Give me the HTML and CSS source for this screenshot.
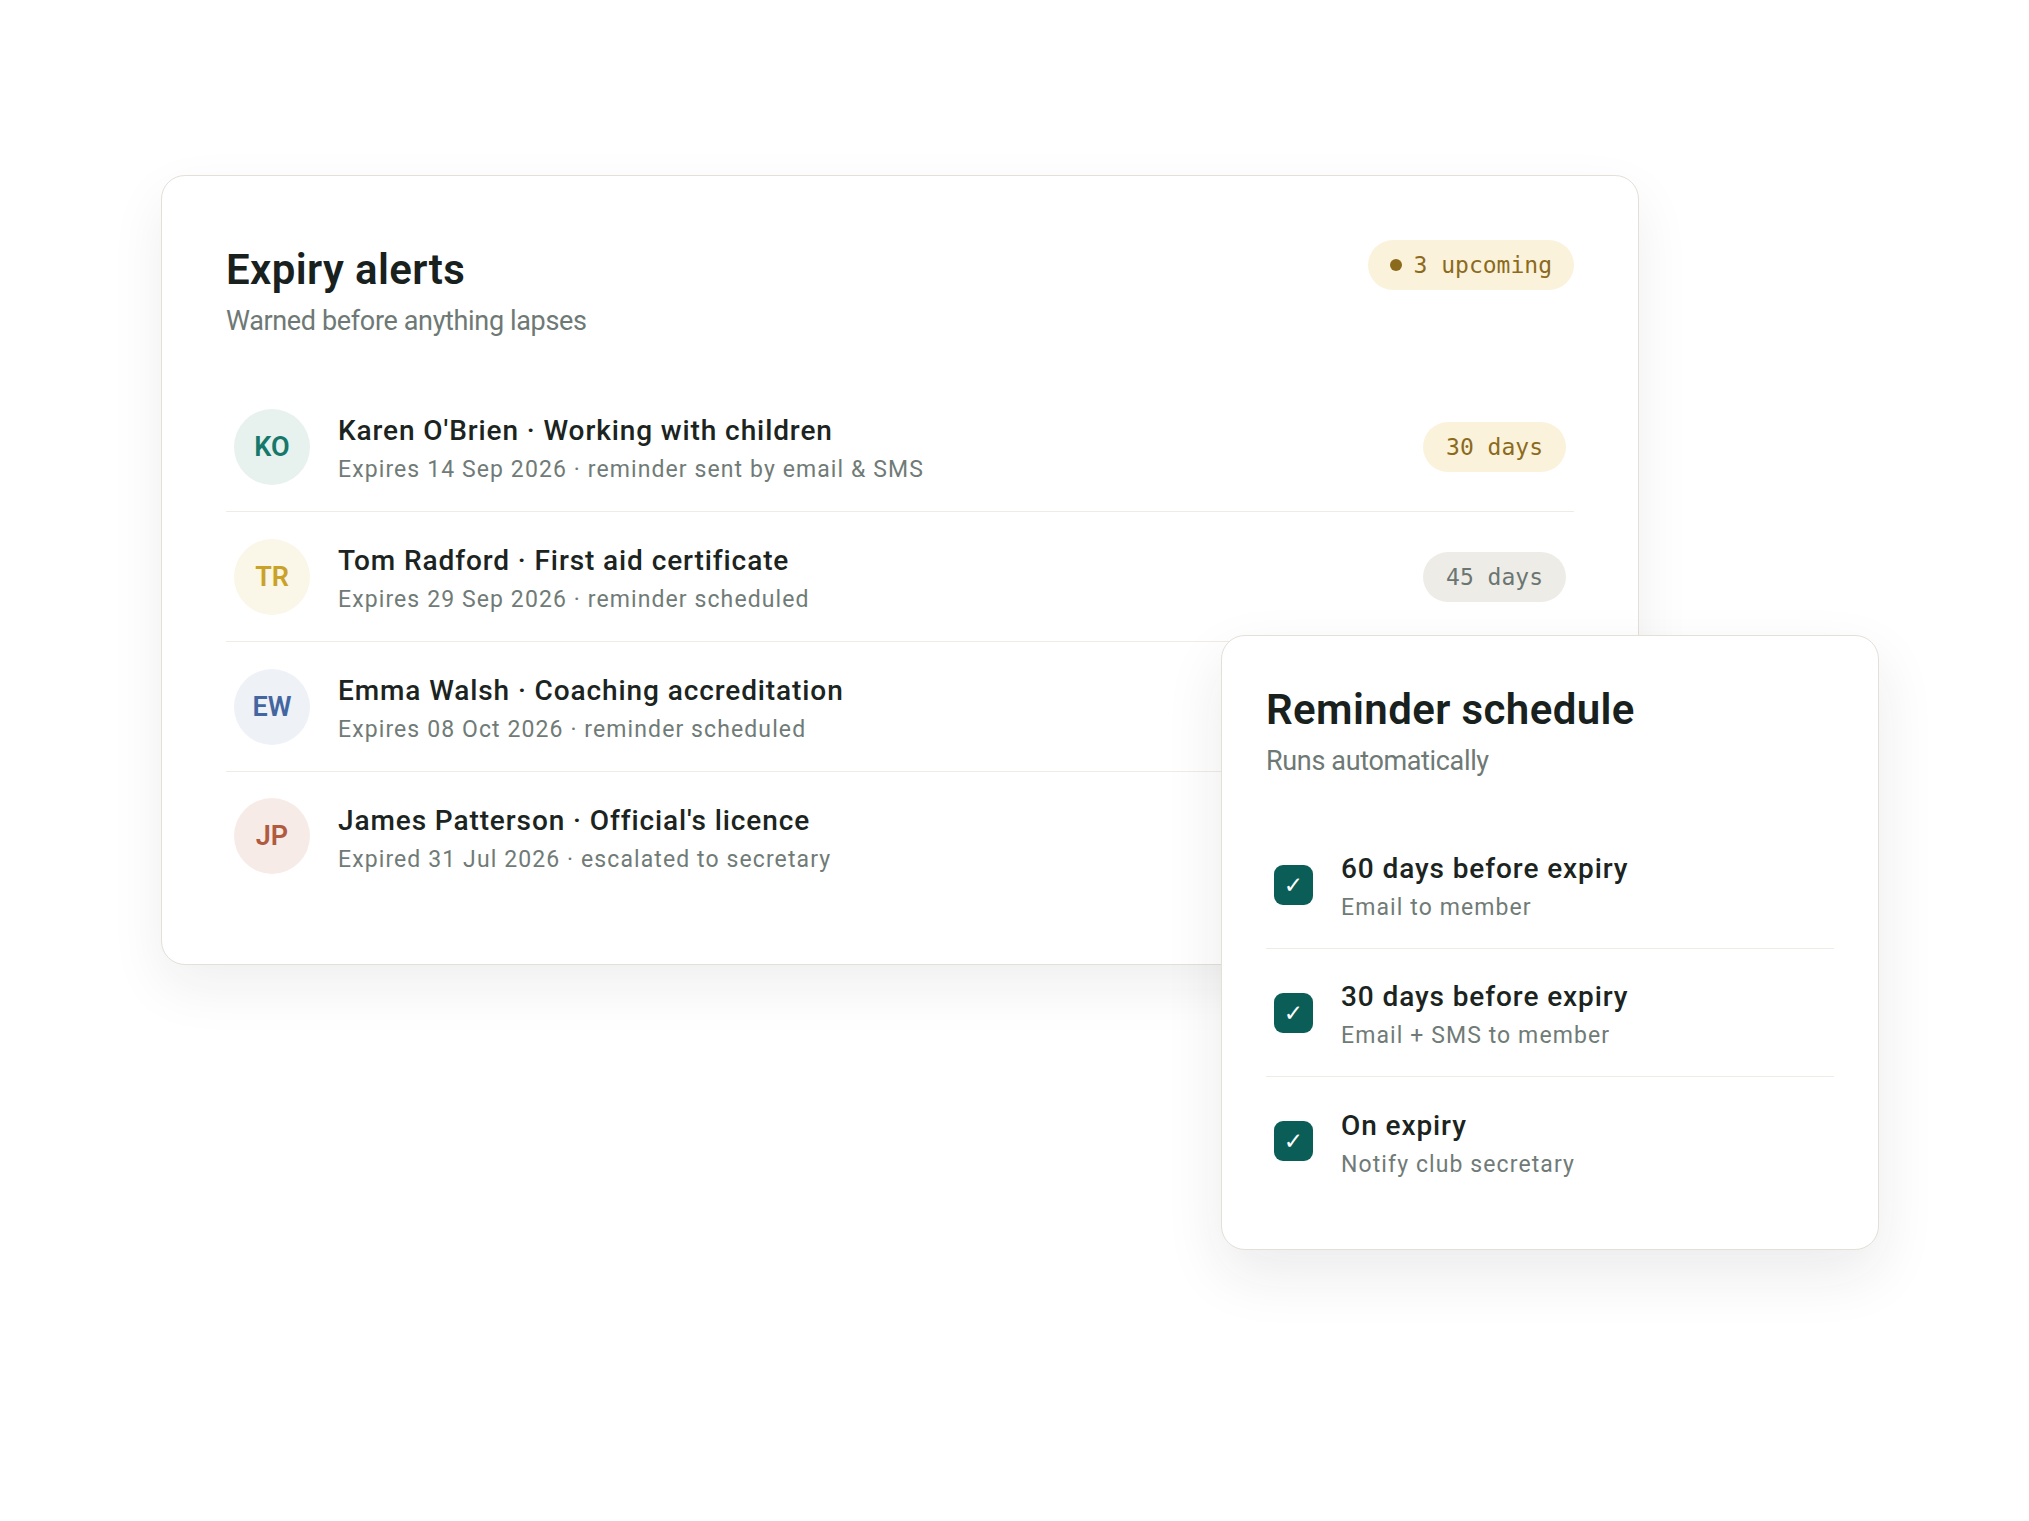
FILE: index.html
```html
<!DOCTYPE html>
<html lang="en">
<head>
<meta charset="utf-8">
<title>Expiry alerts</title>
<link rel="stylesheet" href="styles.css">
</head>
<body>
<main class="scene">
  <section class="card alerts">
    <header class="card-head">
      <div>
        <h1 class="card-title">Expiry alerts</h1>
        <p class="card-sub">Warned before anything lapses</p>
      </div>
      <span class="badge"><span class="badge-dot"></span>3 upcoming</span>
    </header>
    <ul class="alert-list">
      <li class="alert-row">
        <span class="avatar av-teal">KO</span>
        <div class="row-text">
          <p class="row-title">Karen O'Brien · Working with children</p>
          <p class="row-meta">Expires 14 Sep 2026 · reminder sent by email &amp; SMS</p>
        </div>
        <span class="pill pill-gold">30 days</span>
      </li>
      <li class="alert-row">
        <span class="avatar av-gold">TR</span>
        <div class="row-text">
          <p class="row-title">Tom Radford · First aid certificate</p>
          <p class="row-meta">Expires 29 Sep 2026 · reminder scheduled</p>
        </div>
        <span class="pill pill-grey">45 days</span>
      </li>
      <li class="alert-row">
        <span class="avatar av-blue">EW</span>
        <div class="row-text">
          <p class="row-title">Emma Walsh · Coaching accreditation</p>
          <p class="row-meta">Expires 08 Oct 2026 · reminder scheduled</p>
        </div>
      </li>
      <li class="alert-row">
        <span class="avatar av-rust">JP</span>
        <div class="row-text">
          <p class="row-title">James Patterson · Official's licence</p>
          <p class="row-meta">Expired 31 Jul 2026 · escalated to secretary</p>
        </div>
      </li>
    </ul>
  </section>

  <section class="card schedule">
    <header>
      <h2 class="card-title">Reminder schedule</h2>
      <p class="card-sub">Runs automatically</p>
    </header>
    <ul class="step-list">
      <li class="step">
        <span class="check">✓</span>
        <div class="step-text">
          <p class="row-title">60 days before expiry</p>
          <p class="row-meta step-sub">Email to member</p>
        </div>
      </li>
      <li class="step">
        <span class="check">✓</span>
        <div class="step-text">
          <p class="row-title">30 days before expiry</p>
          <p class="row-meta step-sub">Email + SMS to member</p>
        </div>
      </li>
      <li class="step">
        <span class="check">✓</span>
        <div class="step-text">
          <p class="row-title">On expiry</p>
          <p class="row-meta step-sub">Notify club secretary</p>
        </div>
      </li>
    </ul>
  </section>
</main>
</body>
</html>
```

FILE: styles.css
```css
* { box-sizing: border-box; }

html, body {
  margin: 0;
  padding: 0;
  background: #ffffff;
}

body {
  font-family: Roboto, "Liberation Sans", sans-serif;
  color: #1b2421;
}

p, h1, h2, ul { margin: 0; padding: 0; }
ul { list-style: none; }

.scene {
  position: relative;
  width: 2029px;
  height: 1521px;
  padding: 175px 0 0 161px;
}

.card {
  background: #ffffff;
  border: 1px solid #e4e0d8;
  border-radius: 24px;
  box-shadow: 0 22px 55px rgba(30, 35, 30, 0.07);
}

.alerts {
  width: 1478px;
  padding: 64px;
}

.card-head {
  display: flex;
  justify-content: space-between;
  align-items: flex-start;
}

.card-title {
  font-size: 42px;
  line-height: 60px;
  font-weight: 600;
  color: #18211e;
  letter-spacing: 0.4px;
}

.card-sub {
  margin-top: 2px;
  font-size: 27px;
  line-height: 38px;
  font-weight: 400;
  color: #6e7975;
  letter-spacing: -0.35px;
}

.badge {
  display: inline-flex;
  align-items: center;
  gap: 12px;
  height: 50px;
  padding: 0 22px;
  border-radius: 25px;
  background: #fbf2dc;
  color: #8b6a1c;
  font-family: "DejaVu Sans Mono", "Liberation Mono", monospace;
  font-size: 23px;
}

.badge-dot {
  width: 12px;
  height: 12px;
  border-radius: 50%;
  background: #8b6a1c;
}

.alert-list {
  margin-top: 42px;
}

.alert-row {
  display: flex;
  align-items: center;
  gap: 28px;
  height: 130px;
  padding: 0 8px;
  border-bottom: 1px solid #efece6;
}

.alert-row:last-child {
  border-bottom: none;
  height: 128px;
}

.avatar {
  flex: none;
  width: 76px;
  height: 76px;
  border-radius: 50%;
  display: flex;
  align-items: center;
  justify-content: center;
  font-size: 27px;
  font-weight: 600;
}

.av-teal { background: #e7f2ef; color: #16786a; }
.av-gold { background: #faf6e8; color: #c9a227; }
.av-blue { background: #eef1f6; color: #4466a0; }
.av-rust { background: #f7ebe7; color: #b05a40; }

.row-text {
  flex: 1;
  padding-top: 6px;
}

.row-title {
  font-size: 28px;
  line-height: 36px;
  font-weight: 500;
  color: #1b2421;
  letter-spacing: 0.9px;
}

.row-meta {
  margin-top: 5px;
  font-size: 23px;
  line-height: 32px;
  color: #707b77;
  letter-spacing: 1.1px;
}

.pill {
  flex: none;
  display: inline-flex;
  align-items: center;
  height: 50px;
  padding: 0 23px;
  border-radius: 25px;
  font-family: "DejaVu Sans Mono", "Liberation Mono", monospace;
  font-size: 23px;
}

.pill-gold { background: #fbf2dc; color: #8b6a1c; }
.pill-grey { background: #eeece7; color: #6b7571; }

.schedule {
  position: absolute;
  left: 1221px;
  top: 635px;
  width: 658px;
  padding: 44px;
  box-shadow: 0 24px 60px rgba(30, 35, 30, 0.09);
}

.step-list {
  margin-top: 41px;
}

.step {
  display: flex;
  align-items: center;
  gap: 28px;
  height: 128px;
  padding: 0 8px;
  border-bottom: 1px solid #efece6;
}

.step:last-child {
  border-bottom: none;
  height: 128px;
}

.check {
  flex: none;
  width: 39px;
  height: 40px;
  border-radius: 9px;
  background: #0b5e57;
  color: #ffffff;
  display: flex;
  align-items: center;
  justify-content: center;
  font-family: "DejaVu Sans", sans-serif;
  font-size: 23px;
}

.step-text {
  padding-top: 6px;
}

.step-sub {
  margin-top: 5px;
}
```
